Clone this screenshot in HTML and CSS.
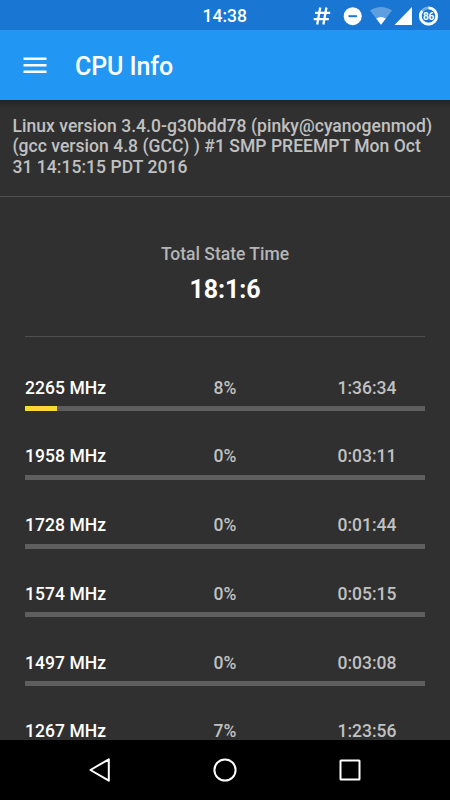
FILE: index.html
```html
<!DOCTYPE html>
<html lang="en">
<head>
<meta charset="utf-8">
<title>CPU Info</title>
<link rel="stylesheet" href="styles.css">
</head>
<body>
<div class="screen">
  <div class="status">
    <time class="clock">14:38</time>
    <svg class="status-icons" width="130" height="30" viewBox="0 0 130 30" fill="#fff">
      <path d="M7.200 6.500 4.200 23.500M13.400 6.500 10.400 23.500M2 11.800H17.200M.700 18.200H15.800" fill="none" stroke="#fff" stroke-width="2.300"/>
      <circle cx="39.700" cy="15.200" r="9"/>
      <path d="M35.500 15.200h8.400" stroke="#1976d2" stroke-width="2"/>
      <path d="M57 9.600C63.500 4.700 72.500 4.700 79 9.600L68 23.800Z" fill-opacity=".3"/>
      <path d="M63.200 17.600Q68 14.500 72.800 17.600L68 23.800Z"/>
      <path d="M99 6v18H81.500Z"/>
      <circle cx="115.500" cy="15" r="8.200" fill="none" stroke="#fff" stroke-opacity=".4" stroke-width="2.700"/>
      <circle cx="115.500" cy="15" r="8.200" fill="none" stroke="#fff" stroke-width="2.700" pathLength="100" stroke-dasharray="86 14" transform="rotate(-90 115.5 15)"/>
      <text class="battery" x="115.500" y="18.500" text-anchor="middle">86</text>
    </svg>
  </div>
  <header class="appbar">
    <svg class="menu" width="24" height="16" viewBox="0 0 24 16"><path d="M.5 1.700h23M.5 8.200h23M.5 14.700h23" stroke="#fff" stroke-width="2.400"/></svg>
    <h1 class="title">CPU Info</h1>
  </header>
  <main class="content">
    <p class="kernel">Linux version 3.4.0-g30bdd78 (pinky@cyanogenmod)<br>(gcc version 4.8 (GCC) ) #1 SMP PREEMPT Mon Oct<br>31 14:15:15 PDT 2016</p>
    <section class="total">
      <h2 class="total-label">Total State Time</h2>
      <div class="total-time">18:1:6</div>
    </section>
    <div class="states">
      <div class="state"><span class="freq">2265 MHz</span><span class="pct">8%</span><span class="time">1:36:34</span><div class="bar"><div class="fill" style="width:8%"></div></div></div>
      <div class="state"><span class="freq">1958 MHz</span><span class="pct">0%</span><span class="time">0:03:11</span><div class="bar"></div></div>
      <div class="state"><span class="freq">1728 MHz</span><span class="pct">0%</span><span class="time">0:01:44</span><div class="bar"></div></div>
      <div class="state"><span class="freq">1574 MHz</span><span class="pct">0%</span><span class="time">0:05:15</span><div class="bar"></div></div>
      <div class="state"><span class="freq">1497 MHz</span><span class="pct">0%</span><span class="time">0:03:08</span><div class="bar"></div></div>
      <div class="state"><span class="freq">1267 MHz</span><span class="pct">7%</span><span class="time">1:23:56</span></div>
    </div>
  </main>
  <nav class="navbar">
    <svg width="26" height="26" viewBox="0 0 26 26"><path d="M21.800 2.300v21.400L3.400 13Z"/></svg>
    <svg width="26" height="26" viewBox="0 0 26 26"><circle cx="13" cy="13" r="10.600"/></svg>
    <svg width="26" height="26" viewBox="0 0 26 26"><rect x="3.500" y="3.500" width="19" height="19" rx=".5"/></svg>
  </nav>
</div>
</body>
</html>
```

FILE: styles.css
```css
* { box-sizing: border-box; }
body { margin: 0; background: #000; font-family: Roboto, "Liberation Sans", sans-serif; }
.screen { width: 450px; height: 800px; display: flex; flex-direction: column; overflow: hidden; }
.status { height: 30px; flex: none; background: #1976d2; display: grid; grid-template-columns: 313px 130px; align-items: center; }
.clock { color: #fff; font-size: 17.5px; font-weight: 500; line-height: 30px; padding: 1px 0 0 202.5px; }
.status-icons { display: block; }
.battery { font-size: 10px; font-weight: 700; letter-spacing: -.3px; }
.appbar { height: 70px; flex: none; background: #2196f3; display: flex; align-items: center; padding-left: 23px; gap: 28px; }
.title { margin: 4px 0 0; color: #fff; font-size: 25px; line-height: 30px; font-weight: 500; letter-spacing: -.1px; }
.content { flex: 1; min-height: 0; overflow: hidden; background: linear-gradient(#242424, #303030 8px); }
.kernel { margin: 0; height: 97px; padding: 15.5px 0 0 12.5px; border-bottom: 1px solid #505050; color: #c1c1c1; font-size: 17.5px; line-height: 20.5px; font-weight: 500; letter-spacing: .04px; white-space: nowrap; }
.total { height: 140px; margin: 0 25px; padding-top: 47px; border-bottom: 1px solid #505050; text-align: center; }
.total-label { margin: 0; font-size: 17.5px; line-height: 21px; font-weight: 500; color: #b5b5b5; }
.total-time { margin-top: 10px; font-size: 25px; line-height: 30px; font-weight: 700; letter-spacing: -.1px; color: #fff; }
.states { padding: 40.5px 25px 0; }
.state { height: 68.75px; display: grid; grid-template-columns: 147px 106px 147px; grid-template-rows: 21px 5px; row-gap: 7.5px; align-content: start; color: #c1c1c1; font-size: 17.5px; line-height: 21px; font-weight: 500; }
.freq { color: #fff; letter-spacing: .05px; }
.pct { text-align: center; }
.time { padding-left: 59.5px; }
.bar { grid-column: 1 / -1; height: 5px; background: #5e5e5e; }
.fill { height: 100%; background: #fdd835; }
.navbar { height: 60px; flex: none; background: #000; display: flex; justify-content: center; align-items: center; gap: 99px; fill: none; stroke: #fff; stroke-width: 2; stroke-linejoin: round; }
```
